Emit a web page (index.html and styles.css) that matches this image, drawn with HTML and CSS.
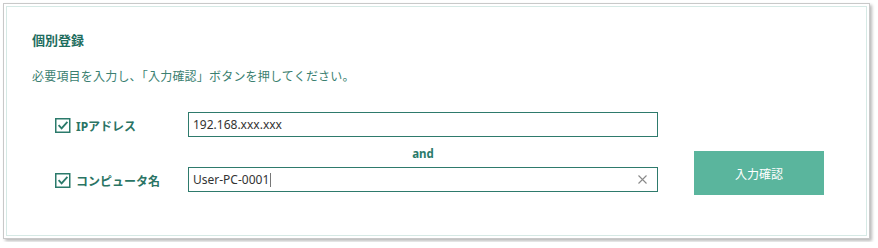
FILE: index.html
```html
<!DOCTYPE html>
<html lang="ja">
<head>
<meta charset="utf-8">
<title>個別登録</title>
<link rel="stylesheet" href="styles.css">
</head>
<body>
<div class="frame">
  <div class="panel">
    <h2 class="title">個別登録</h2>
    <p class="lead">必要項目を入力し、「入力確認」ボタンを押してください。</p>
    <div class="form">
      <div class="fields">
        <div class="row">
          <label class="check">
            <svg class="box" width="16" height="15" viewBox="0 0 16 15"><rect x="0.75" y="0.75" width="14" height="13.5" fill="#fff" stroke="#2b7a6b" stroke-width="1.5"/><path d="M3.6 7.2 L6.6 10.4 L12.4 3.8" fill="none" stroke="#2b7a6b" stroke-width="1.8"/></svg>
            <span class="label">IPアドレス</span>
          </label>
          <div class="field"><span class="value">192.168.xxx.xxx</span></div>
        </div>
        <div class="and">and</div>
        <div class="row">
          <label class="check">
            <svg class="box" width="16" height="15" viewBox="0 0 16 15"><rect x="0.75" y="0.75" width="14" height="13.5" fill="#fff" stroke="#2b7a6b" stroke-width="1.5"/><path d="M3.6 7.2 L6.6 10.4 L12.4 3.8" fill="none" stroke="#2b7a6b" stroke-width="1.8"/></svg>
            <span class="label">コンピュータ名</span>
          </label>
          <div class="field"><span class="value">User-PC-0001</span><span class="caret"></span>
            <svg class="clear" width="9" height="9" viewBox="0 0 9 9"><path d="M0.5 0.5 L8.5 8.5 M8.5 0.5 L0.5 8.5" stroke="#8a8a8a" stroke-width="1.1" fill="none"/></svg>
          </div>
        </div>
      </div>
      <button class="confirm" type="button">入力確認</button>
    </div>
  </div>
</div>
</body>
</html>
```

FILE: styles.css
```css
html, body {
  margin: 0;
  padding: 0;
  background: #ffffff;
}
body {
  padding: 3px;
  font-family: "Noto Sans", "Noto Sans CJK JP", sans-serif;
}
.frame {
  width: 867px;
  height: 236px;
  box-sizing: border-box;
  border: 1px solid #c9c9c9;
  padding: 2px;
  background: #fff;
  box-shadow: 2px 2px 3px rgba(0, 0, 0, 0.28);
}
.panel {
  height: 100%;
  box-sizing: border-box;
  border: 1px solid #d6e9e5;
  padding: 24px 0 0 25px;
}
.title {
  margin: 0;
  font-size: 13px;
  line-height: 18px;
  font-weight: 700;
  color: #1d6d5e;
}
.lead {
  margin: 19px 0 0 0;
  font-size: 12px;
  line-height: 18px;
  color: #3b7f71;
  letter-spacing: 0.2px;
}
.form {
  display: flex;
  align-items: flex-start;
  margin: 26px 0 0 23px;
}
.fields {
  display: flex;
  flex-direction: column;
}
.row {
  display: flex;
  align-items: center;
  height: 25px;
}
.check {
  display: flex;
  align-items: center;
  gap: 5px;
  width: 133px;
  padding-top: 2px;
}
.box {
  display: block;
}
.label {
  font-size: 12px;
  font-weight: 700;
  color: #2a7464;
}
.field {
  position: relative;
  width: 470px;
  height: 25px;
  box-sizing: border-box;
  border: 1px solid #2e7a6c;
  display: flex;
  align-items: center;
  padding-left: 4px;
  font-size: 12px;
  color: #333;
}
.value {
  line-height: 16px;
}
.caret {
  width: 1px;
  height: 14px;
  background: #777;
  margin-left: 1px;
}
.clear {
  position: absolute;
  right: 10px;
  top: 7px;
}
.and {
  height: 30px;
  line-height: 30px;
  padding-left: 133px;
  width: 470px;
  text-align: center;
  font-size: 11.5px;
  font-weight: 700;
  color: #2a7a6a;
  margin-top: 2px;
  margin-bottom: -2px;
}
.confirm {
  margin-left: 36px;
  margin-top: 39px;
  width: 130px;
  height: 44px;
  border: none;
  background: #5ab59d;
  color: #fff;
  font-family: "Noto Sans CJK JP", sans-serif;
  font-size: 12px;
  padding: 0;
}
```
